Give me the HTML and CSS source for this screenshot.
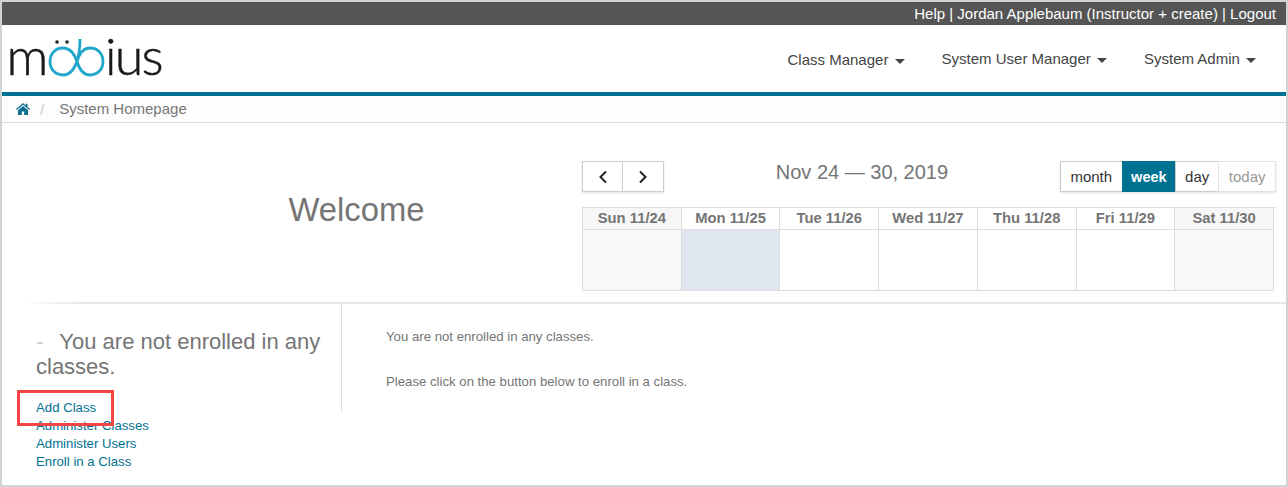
FILE: index.html
```html
<!DOCTYPE html>
<html lang="en">
<head>
<meta charset="utf-8">
<title>System Homepage</title>
<link rel="stylesheet" href="styles.css">
</head>
<body>
<div class="frame">
  <div class="topbar"><a href="#">Help</a> | Jordan Applebaum (Instructor + create) | <a href="#">Logout</a></div>
  <header class="nav">
    <svg class="logo" width="160" height="67" viewBox="0 0 160 67" aria-label="mobius">
      <text class="logo-text" x="-1.400" y="50">m</text>
      <circle class="logo-dot" cx="49" cy="17" r="1.800"/>
      <circle class="logo-dot" cx="59" cy="17" r="1.800"/>
      <path class="logo-inf" d="M69 36.500C66 28 62 23 55 23C47 23 42 29 42 36.500C42 44 47 50 55 50C62 50 66 45 69 36.500C71.500 28 75 23 82 23C90 23 95 29 95 36.500C95 44 90 50 82 50C75 50 71.500 45 69 36.500C71 30 72 24 72 14"/>
      <text class="logo-text logo-tight" x="97" y="50">ius</text>
    </svg>
    <nav class="menu">
      <a class="menu-item menu-low" href="#">Class Manager <span class="caret"></span></a>
      <a class="menu-item" href="#">System User Manager <span class="caret"></span></a>
      <a class="menu-item" href="#">System Admin <span class="caret"></span></a>
    </nav>
  </header>
  <div class="crumbs">
    <svg class="home" width="14" height="12" viewBox="0 0 14 12"><path d="M7 0L0 6l.8 1L7 1.800 13.200 7l.8-1-2.500-2.100V.8h-1.800v1.600zM2 7.300V12h3.800V8.500h2.400V12H12V7.300L7 3z"/></svg>
    <span class="sep">/</span>
    <span class="crumb-text">System Homepage</span>
  </div>
  <section class="hero">
    <h1 class="welcome">Welcome</h1>
    <div class="calendar">
      <div class="cal-bar">
        <div class="btn-group">
          <button class="btn arrow" type="button"><svg width="10" height="14" viewBox="0 0 10 14"><path d="M8 1.500L2.500 7 8 12.500"/></svg></button>
          <button class="btn arrow" type="button"><svg width="10" height="14" viewBox="0 0 10 14"><path d="M2 1.500L7.500 7 2 12.500"/></svg></button>
        </div>
        <h2 class="range">Nov 24 — 30, 2019</h2>
        <div class="btn-group">
          <button class="btn" type="button">month</button>
          <button class="btn active" type="button">week</button>
          <button class="btn narrow" type="button">day</button>
          <button class="btn disabled" type="button">today</button>
        </div>
      </div>
      <div class="grid">
        <div class="head">Sun 11/24</div><div class="head plain">Mon 11/25</div><div class="head plain">Tue 11/26</div><div class="head plain">Wed 11/27</div><div class="head plain">Thu 11/28</div><div class="head plain">Fri 11/29</div><div class="head">Sat 11/30</div>
        <div class="cell weekend"></div><div class="cell today-cell"></div><div class="cell"></div><div class="cell"></div><div class="cell"></div><div class="cell"></div><div class="cell weekend"></div>
      </div>
    </div>
  </section>
  <section class="lower">
    <aside class="side">
      <h3 class="side-title"><span class="dash">-</span>You are not enrolled in any classes.</h3>
      <ul class="links">
        <li class="marked"><a href="#">Add Class</a></li>
        <li><a href="#">Administer Classes</a></li>
        <li><a href="#">Administer Users</a></li>
        <li><a href="#">Enroll in a Class</a></li>
      </ul>
    </aside>
    <div class="main">
      <p>You are not enrolled in any classes.</p>
      <p>Please click on the button below to enroll in a class.</p>
    </div>
  </section>
</div>
</body>
</html>
```
FILE: styles.css
```css
*, *::before, *::after { box-sizing: border-box; }
html, body { margin: 0; height: 100%; }
body { background: #fff; font-family: "Liberation Sans", Arial, sans-serif; color: #757575; overflow: hidden; }
a { text-decoration: none; color: inherit; }
.frame { width: 1288px; height: 487px; border: 2px solid #d2d2d2; overflow: hidden; }
.topbar { height: 23px; background: #555; color: #fff; font-size: 15px; line-height: 23px; text-align: right; padding-right: 10px; }
.nav { height: 67px; display: flex; align-items: center; justify-content: space-between; padding: 0 30px 0 6px; background: #fff; }
.logo { display: block; flex: none; }
.logo-text { font-family: "Lato", sans-serif; font-weight: 300; font-size: 52px; fill: #1a1a1a; stroke: #1a1a1a; stroke-width: .5; }
.logo-tight { letter-spacing: -1.800px; }
.logo-dot { fill: #222; }
.logo-inf { fill: none; stroke: #22a7cc; stroke-width: 2.800; }
.menu { display: flex; gap: 37px; margin-top: 1px; }
.menu-item { color: #444; font-size: 15px; }
.menu-low { margin-top: 1px; }
.caret { display: inline-block; margin-left: 2px; vertical-align: middle; border-top: 5px solid #444; border-left: 5px solid transparent; border-right: 5px solid transparent; }
.crumbs { height: 31px; border-top: 4px solid #007291; border-bottom: 1px solid #ddd; background: #fdfdfd; display: flex; align-items: center; padding-left: 14px; font-size: 15px; line-height: 17px; color: #777; }
.crumb-text { margin-top: -1px; }
.home { fill: #0e6f8e; display: block; }
.sep { color: #ccc; margin: 0 15px 0 10px; }
.hero { height: 179px; display: flex; position: relative; }
.welcome { width: 580px; margin: 0; padding: 67px 0 0 129px; text-align: center; font-size: 32.800px; font-weight: 400; line-height: 40px; color: #757575; flex: none; }
.calendar { width: 694px; flex: none; padding-top: 38px; }
.cal-bar { display: flex; justify-content: space-between; align-items: flex-start; height: 46px; }
.btn-group { display: flex; box-shadow: 0 1px 2px rgba(0,0,0,.12); }
.btn { height: 31px; border: 1px solid #ccc; margin-left: -1px; background: #fff; font: 15px "Liberation Sans", Arial, sans-serif; color: #333; padding: 0 9.500px; display: flex; align-items: center; justify-content: center; }
.btn:first-child { margin-left: 0; }
.btn.narrow { padding: 0 9px; }
.btn.arrow { width: 41px; padding: 0; }
.btn.arrow + .arrow { width: 42px; }
.arrow svg { fill: none; stroke: #222; stroke-width: 2; display: block; }
.btn.active { background: #007291; color: #fff; font-weight: 700; font-size: 14.500px; border-color: #007291; padding: 0 8.500px; }
.disabled { color: #999; border-color: #e2e2e2; }
.range { margin: -2px 0 0 0; font-size: 20px; font-weight: 400; line-height: 26px; color: #757575; }
.grid { display: grid; grid-template-columns: repeat(7, 98.710px); width: 694px; border-left: 1px solid #ddd; border-top: 1px solid #ddd; }
.head, .cell { border-right: 1px solid #ddd; border-bottom: 1px solid #ddd; }
.head { height: 22px; background: #f7f7f7; text-align: center; font-size: 14.800px; font-weight: 700; line-height: 21px; color: #757575; }
.plain { background: #fff; }
.cell { height: 61px; }
.weekend { background: #f8f8f8; }
.today-cell { background: #dfe6ef; }
.lower { display: flex; border-top: 2px solid #e6e6e6; border-image: linear-gradient(to right, #fff 22px, #e6e6e6 80px) 1; height: 186px; padding-left: 20px; }
.side { width: 320px; flex: none; height: 108px; border-right: 1px solid #ddd; padding: 25px 0 0 14px; }
.side-title { margin: 0; font-size: 22px; font-weight: 400; line-height: 25px; color: #757575; width: 300px; }
.dash { color: #ccc; margin-right: 16px; }
.links { list-style: none; margin: 20px 0 0; padding: 0; width: 300px; }
.links li { font-size: 13.200px; line-height: 18px; color: #007291; }
.marked { position: relative; }
.marked::after { content: ""; position: absolute; left: -19px; top: -9px; width: 97px; height: 36px; border: 3px solid #f44545; }
.main { padding: 25px 0 0 44px; font-size: 13.200px; color: #757575; }
.main p { margin: 0 0 30px; line-height: 15px; }
```
